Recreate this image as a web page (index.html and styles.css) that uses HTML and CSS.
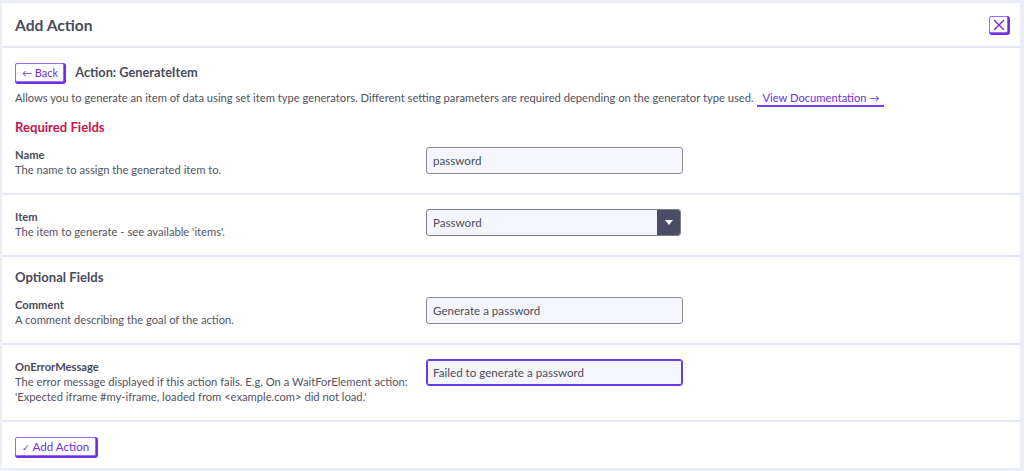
FILE: index.html
```html
<!DOCTYPE html>
<html>
<head>
<meta charset="utf-8">
<link rel="stylesheet" href="styles.css">
</head>
<body>
<div class="panel">
  <header class="head">
    <h1 class="title">Add Action</h1>
    <button class="btn btn-close" aria-label="Close">
      <svg width="12" height="12" viewBox="0 0 12 12"><path d="M1.5 1.5 L10.5 10.5 M10.5 1.5 L1.5 10.5" stroke="currentColor" stroke-width="1.4" fill="none" stroke-linecap="round"/></svg>
    </button>
  </header>
  <div class="intro">
    <div class="action-row">
      <button class="btn btn-back"><span class="arr">&larr;</span> Back</button>
      <span class="action-name">Action: GenerateItem</span>
    </div>
    <p class="desc">Allows you to generate an item of data using set item type generators. Different setting parameters are required depending on the generator type used. <a class="doc-link" href="#">View Documentation <span class="arr">&rarr;</span></a></p>
    <h2 class="section required">Required Fields</h2>
  </div>
  <div class="field first">
    <div class="info">
      <div class="label">Name</div>
      <div class="help">The name to assign the generated item to.</div>
    </div>
    <div class="input">password</div>
  </div>
  <div class="field">
    <div class="info">
      <div class="label">Item</div>
      <div class="help">The item to generate - see available 'items'.</div>
    </div>
    <div class="select">
      <span class="select-val">Password</span>
      <span class="select-btn"><svg width="8" height="5" viewBox="0 0 8 5"><path d="M0 0 H8 L4 5 Z" fill="#fff"/></svg></span>
    </div>
  </div>
  <div class="intro opt">
    <h2 class="section">Optional Fields</h2>
  </div>
  <div class="field first">
    <div class="info">
      <div class="label">Comment</div>
      <div class="help">A comment describing the goal of the action.</div>
    </div>
    <div class="input">Generate a password</div>
  </div>
  <div class="field">
    <div class="info">
      <div class="label">OnErrorMessage</div>
      <div class="help">The error message displayed if this action fails. E.g. On a WaitForElement action:<br>'Expected iframe #my-iframe, loaded from &lt;example.com&gt; did not load.'</div>
    </div>
    <div class="input focus">Failed to generate a password</div>
  </div>
  <div class="foot">
    <button class="btn btn-add"><span class="check">&#10003;</span> Add Action</button>
  </div>
</div>
</body>
</html>
```
FILE: styles.css
```css
* { box-sizing: border-box; }
html, body { margin: 0; padding: 0; }
body {
  background: #eceef7;
  font-family: Lato, "Noto Sans", sans-serif;
  color: #4b4d5c;
  width: 1024px;
  height: 471px;
  overflow: hidden;
}
.panel {
  margin: 3px 4px 3px 2px;
  height: 465px;
  background: #fff;
}
.head {
  height: 45px;
  border-bottom: 2px solid #e5e7f6;
  display: flex;
  align-items: center;
  justify-content: space-between;
  padding: 0 12px 0 13px;
}
.title {
  margin: 0;
  font-size: 15.6px;
  font-weight: 700;
  color: #4a4c5b;
}
.btn {
  font-family: inherit;
  background: #fff;
  border: 1px solid #9b6cf7;
  border-radius: 2px;
  color: #6d2fe0;
  box-shadow: 1px 1px 0 1px #6d2fe0;
  cursor: pointer;
  padding: 0;
}
.btn-close {
  width: 19px;
  height: 17px;
  display: flex;
  align-items: center;
  justify-content: center;
}
.intro { padding: 14px 13px 0; }
.action-row {
  display: flex;
  align-items: center;
  gap: 11px;
  height: 20px;
}
.btn-back {
  height: 19px;
  padding: 0 5px 0 6px;
  font-size: 11px;
  line-height: 17px;
}
.arr { font-size: 10px; }
.action-name {
  font-size: 12.8px;
  font-weight: 700;
  color: #4a4c5b;
}
.desc {
  margin: 7px 0 0;
  font-size: 11.2px;
  line-height: 18px;
  color: #4f5160;
}
.doc-link {
  color: #6d2fe0;
  text-decoration: none;
  border-bottom: 2px solid #7a3ff0;
  padding: 0 5px 1px 5px;
  font-size: 11.2px;
  margin-left: 1px;
}
.section {
  margin: 11px 0 0;
  font-size: 13.1px;
  font-weight: 700;
  color: #4a4c5b;
  line-height: 18px;
}
.section.required { color: #c8134f; }
.opt { padding-top: 11px; }
.opt .section { margin-top: 0; }
.field {
  display: flex;
  align-items: flex-start;
  padding: 14px 13px 16px;
  border-bottom: 2px solid #e5e7f6;
}
.field.first { padding-top: 11px; }
.info { width: 411px; flex: none; }
.label {
  font-size: 11.2px;
  font-weight: 700;
  line-height: 15px;
  color: #4a4c5b;
}
.help {
  font-size: 11.2px;
  line-height: 15px;
  color: #525463;
}
.input, .select {
  width: 257px;
  height: 27px;
  border: 1px solid #8c8c94;
  border-radius: 3px;
  background: #f5f6fb;
  font-size: 11.6px;
  color: #4b4d5c;
  display: flex;
  align-items: center;
  padding-left: 6px;
}
.input.focus {
  border-color: #6a3ae6;
  box-shadow: inset 0 0 0 1px #6a3ae6;
}
.select {
  width: 255px;
  padding-right: 0;
  overflow: hidden;
  border-color: #7d7e88;
}
.select-val { flex: 1; }
.select-btn {
  width: 23px;
  height: 100%;
  background: #4b4c65;
  display: flex;
  align-items: center;
  justify-content: center;
}
.foot { padding: 13px 13px 0; }
.btn-add {
  height: 19px;
  padding: 0 6px 0 6px;
  font-size: 11.6px;
  line-height: 17px;
}
.check { font-size: 9px; }
```
